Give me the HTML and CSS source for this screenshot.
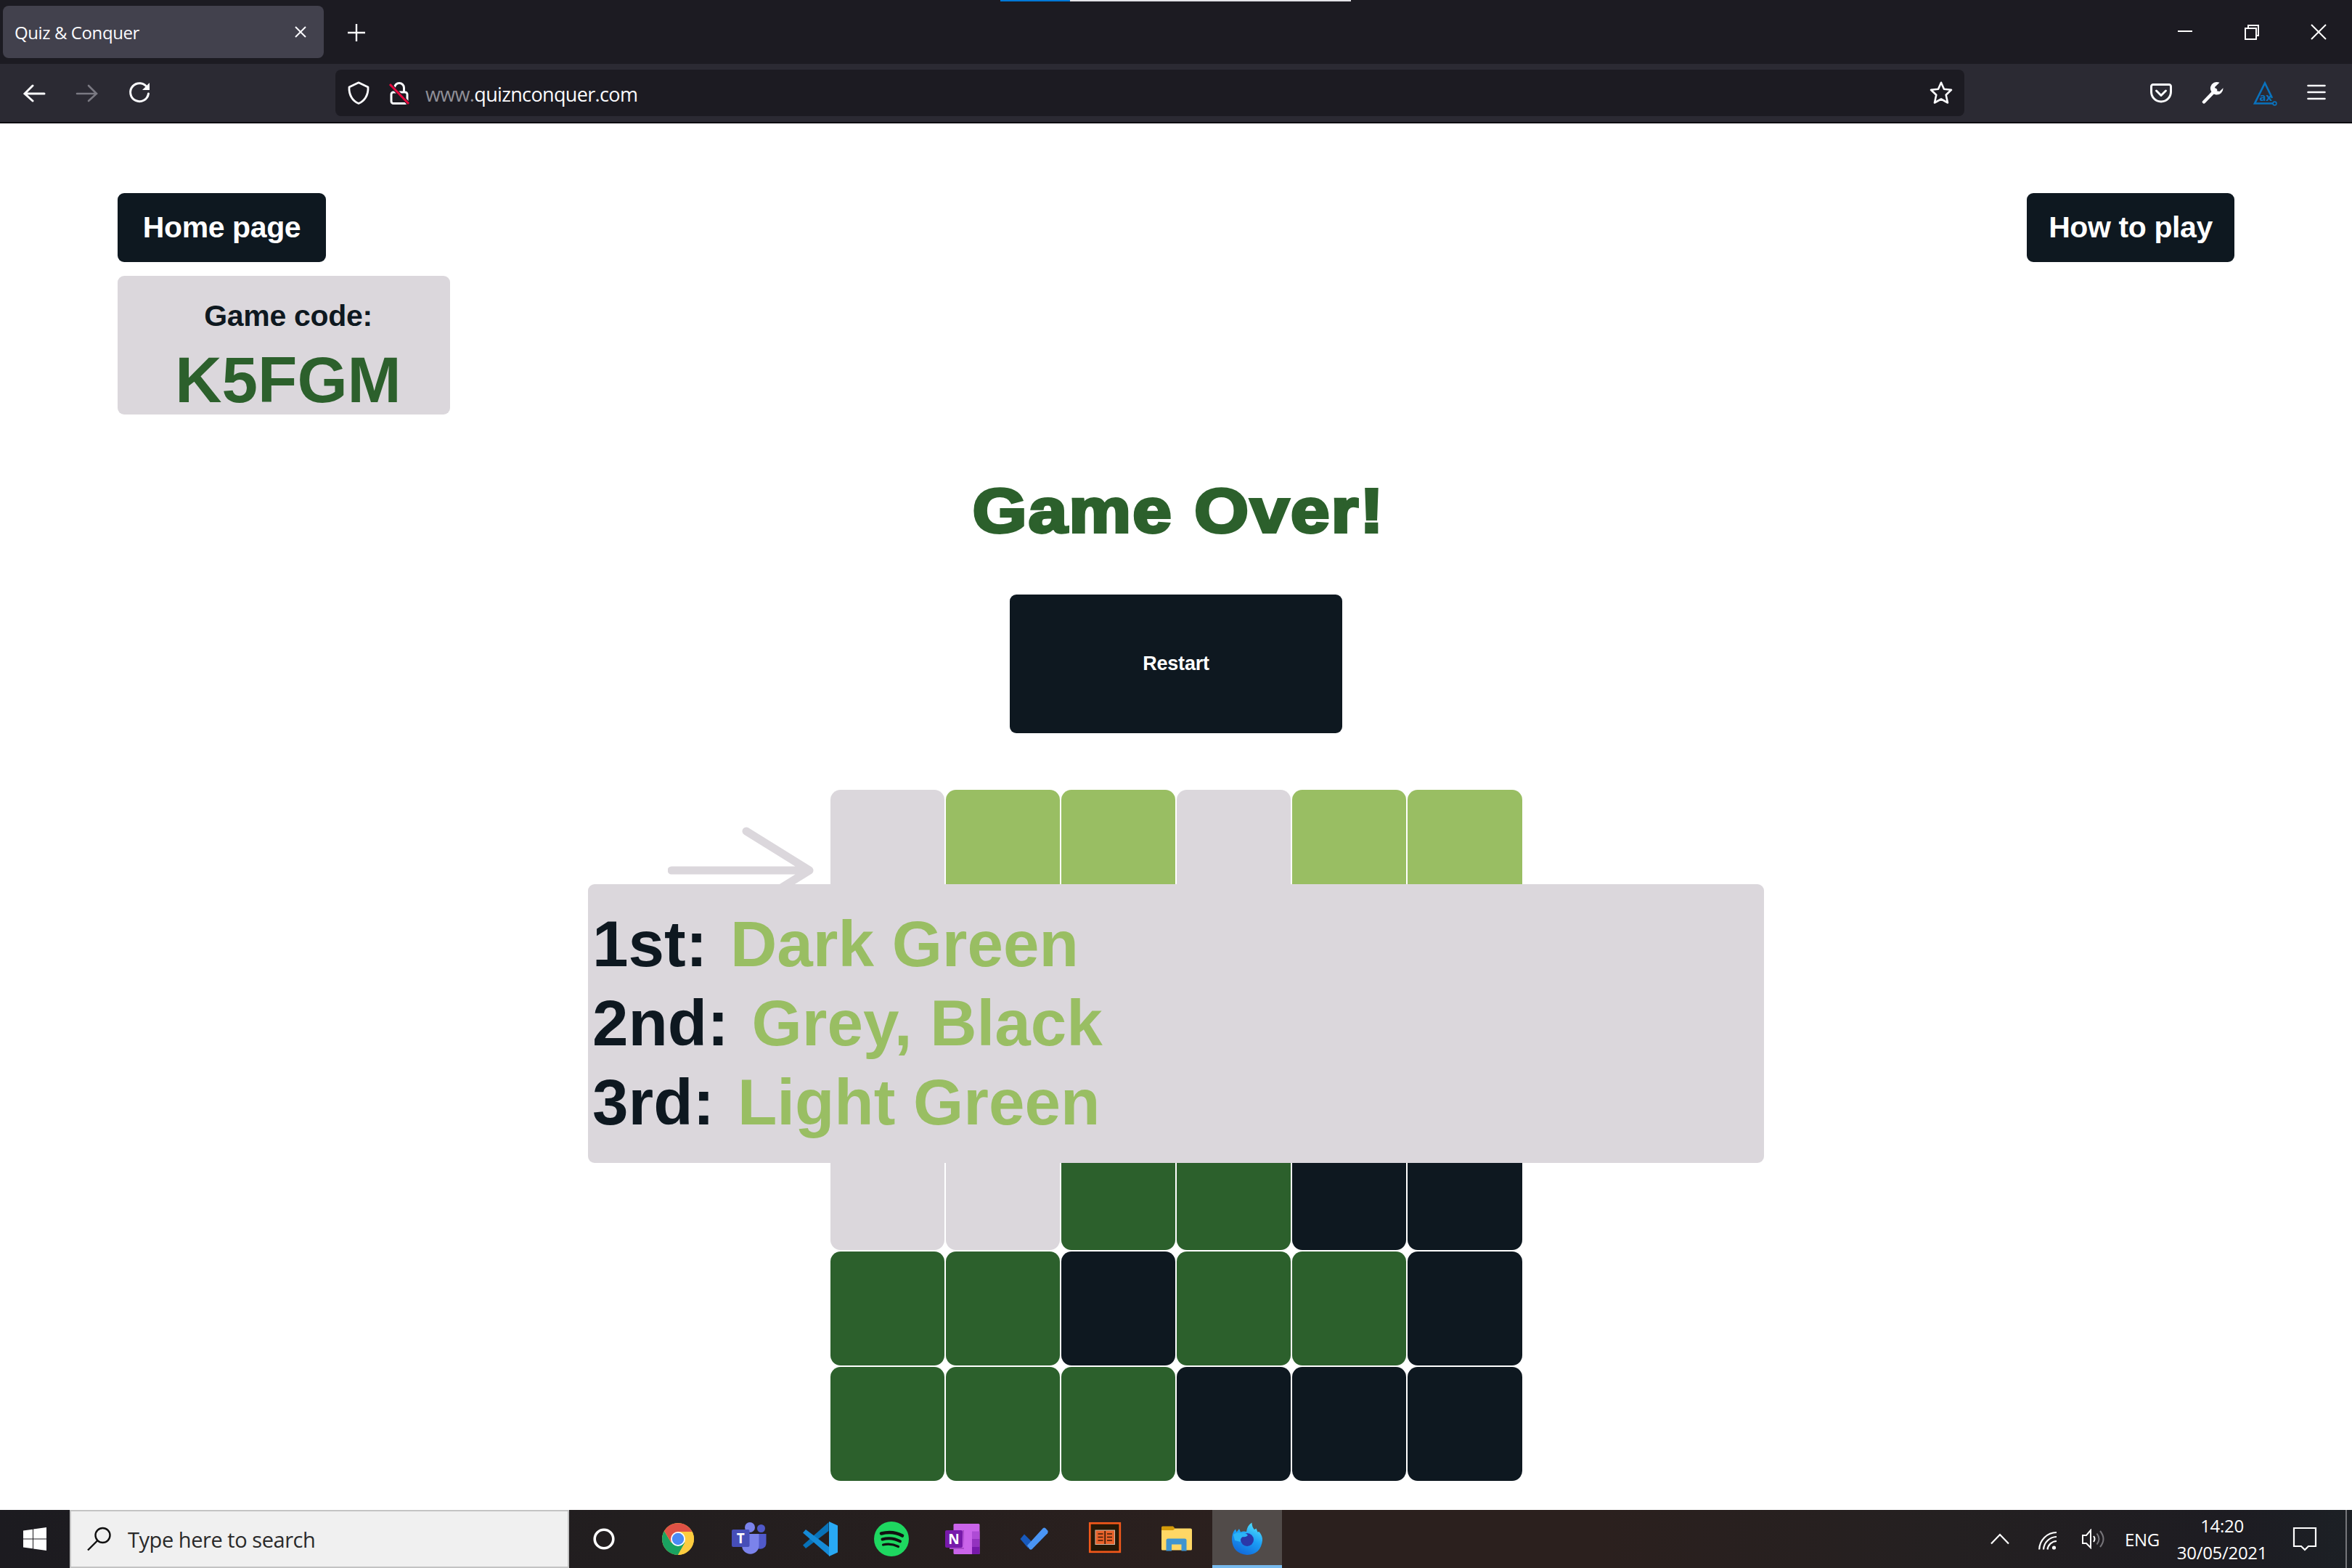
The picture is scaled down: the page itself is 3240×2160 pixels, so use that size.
FILE: index.html
```html
<!DOCTYPE html>
<html lang="en">
<head>
<meta charset="utf-8">
<title>Quiz &amp; Conquer</title>
<link rel="stylesheet" href="styles.css">
</head>
<body>
<header class="browser">
  <div class="tabstrip">
    <div class="progress"><span class="progress-done"></span></div>
    <div class="tab"><span class="tab-title">Quiz &amp; Conquer</span>
      <svg class="tab-close" width="16" height="28" viewBox="0 0 16 28"><path d="M1 7l14 14M15 7L1 21" stroke="#fbfbfe" stroke-width="2"/></svg>
    </div>
    <svg class="newtab" width="24" height="24" viewBox="0 0 24 24"><path d="M12 0v24M0 12h24" stroke="#fbfbfe" stroke-width="2.4"/></svg>
    <div class="window-controls">
      <svg width="22" height="22" viewBox="0 0 22 22"><path d="M1 10h20" stroke="#fff" stroke-width="2"/></svg>
      <svg width="22" height="22" viewBox="0 0 22 22" fill="none" stroke="#fff" stroke-width="2"><path d="M2 6h15v15H2zM6 6V2h14v14h-3"/></svg>
      <svg width="22" height="22" viewBox="0 0 22 22"><path d="M1 1l20 20M21 1L1 21" stroke="#fff" stroke-width="2"/></svg>
    </div>
  </div>
  <div class="toolbar">
    <div class="nav">
      <svg width="32" height="32" viewBox="0 0 32 32" fill="none" stroke="#fbfbfe" stroke-width="3" stroke-linecap="round"><path d="M29 17H2M13 6L2 17l11 10"/></svg>
      <svg width="32" height="32" viewBox="0 0 32 32" fill="none" stroke="#7a7982" stroke-width="2.6" stroke-linecap="round"><path d="M2 17h27M18 6l11 11-11 10"/></svg>
      <svg width="32" height="32" viewBox="0 0 32 32"><path d="M27 9A12.500 12.500 0 1 0 28.500 17" fill="none" stroke="#fbfbfe" stroke-width="3" stroke-linecap="round"/><path d="M30 2v10H20z" fill="#fbfbfe"/></svg>
    </div>
    <div class="urlbar">
      <svg class="shield" width="32" height="32" viewBox="0 0 32 32"><path d="M16 1.800L29 8c.6 11-5 19.500-13 22.500C8 27.500 2.400 19 3 8z" fill="none" stroke="#fbfbfe" stroke-width="2.800" stroke-linejoin="round"/></svg>
      <svg class="lock" width="30" height="32" viewBox="0 0 30 32"><g fill="none" stroke="#fbfbfe" stroke-width="3"><rect x="4" y="15" width="22" height="15.500" rx="3"/><path d="M8.500 9a6.500 6.500 0 0 1 13 0v6"/></g><path d="M2 4l26 27" stroke="#1c1b22" stroke-width="5"/><path d="M2 4l26 27" stroke="#e8083e" stroke-width="3"/></svg>
      <span class="url"><span class="url-dim">www.</span>quiznconquer.com</span>
      <svg class="star" width="32" height="32" viewBox="0 0 32 32"><path d="M16 1.800l4 9 10 1-7.300 7 2.300 10.700L16 24.500l-9 5L9.300 18.800 2 11.800l10-1z" fill="none" stroke="#fbfbfe" stroke-width="2.600" stroke-linejoin="round"/></svg>
    </div>
    <div class="extensions">
      <svg width="30" height="32" viewBox="0 0 30 32" fill="none" stroke="#fbfbfe" stroke-width="3" stroke-linecap="round" stroke-linejoin="round"><path d="M4 4.500h22a2.500 2.500 0 0 1 2.500 2.500v7.500a13.500 13.500 0 0 1-27 0V7A2.500 2.500 0 0 1 4 4.500zM8.500 13l6.500 6.500 6.500-6.500"/></svg>
      <svg width="32" height="32" viewBox="0 0 32 32"><path d="M4 28.500L20 12" stroke="#fbfbfe" stroke-width="4.500" stroke-linecap="round"/><path d="M25.500 1.800a8.800 8.800 0 1 0 5 7.500l-5 4.700-5-1-1.500-5z" fill="#fbfbfe"/></svg>
      <svg width="34" height="36" viewBox="0 0 34 36"><path d="M26 25L16 4.500 2 32.500h25" fill="none" stroke="#0a72bd" stroke-width="2.600"/><circle cx="29.500" cy="32.500" r="2.400" fill="none" stroke="#0a72bd" stroke-width="1.600"/><text x="8.500" y="28.500" class="axe-text">ax</text></svg>
      <svg width="26" height="32" viewBox="0 0 26 32"><path d="M1.500 6h23M1.500 15h23M1.500 24h23" stroke="#fbfbfe" stroke-width="2.600" stroke-linecap="round"/></svg>
    </div>
  </div>
</header>

<main class="page">
  <div class="top-row">
    <div class="top-left">
      <button class="btn home">Home page</button>
      <div class="game-code"><span class="code-label">Game code:</span><span class="code">K5FGM</span></div>
    </div>
    <button class="btn">How to play</button>
  </div>
  <h1 class="title">Game Over!</h1>
  <button class="btn restart">Restart</button>
  <div class="board-wrap">
    <svg class="arrow" width="208" height="140" viewBox="0 0 208 140" fill="none" stroke="#dbd7dc" stroke-width="11" stroke-linejoin="round" stroke-linecap="round"><path d="M5 71h185M108 17l87 54-87 54"/></svg>
    <div class="board">
      <i class="g"></i><i class="l"></i><i class="l"></i><i class="g"></i><i class="l"></i><i class="l"></i>
      <i class="g"></i><i class="l"></i><i class="l"></i><i class="g"></i><i class="l"></i><i class="l"></i>
      <i class="g"></i><i class="g"></i><i class="d"></i><i class="d"></i><i class="k"></i><i class="k"></i>
      <i class="g"></i><i class="g"></i><i class="d"></i><i class="d"></i><i class="k"></i><i class="k"></i>
      <i class="d"></i><i class="d"></i><i class="k"></i><i class="d"></i><i class="d"></i><i class="k"></i>
      <i class="d"></i><i class="d"></i><i class="d"></i><i class="k"></i><i class="k"></i><i class="k"></i>
    </div>
    <div class="results">
      <p>1st: <span>Dark Green</span></p>
      <p>2nd: <span>Grey, Black</span></p>
      <p>3rd: <span>Light Green</span></p>
    </div>
  </div>
</main>

<footer class="taskbar">
  <div class="start"><svg width="32" height="32" viewBox="0 0 32 32" fill="#fff"><path d="M0 4.500l13-1.800V15.500H0zM14 2.500L32 0v15.500H14zM0 16.500h13v12.800L0 27.500zM14 16.500h18V32l-18-2.500z"/></svg></div>
  <div class="search">
    <svg width="34" height="34" viewBox="0 0 34 34" fill="none" stroke="#111" stroke-width="2.400"><circle cx="21.500" cy="12" r="10"/><path d="M14.500 19L1 32.500"/></svg>
    <span>Type here to search</span>
  </div>
  <div class="apps">
    <div class="app cortana"><svg width="48" height="48" viewBox="0 0 48 48"><circle cx="24" cy="24" r="12.800" fill="none" stroke="#fff" stroke-width="3.600"/></svg></div>
    <div class="app"><svg width="48" height="48" viewBox="0 0 48 48"><circle cx="24" cy="24" r="22" fill="#fdcc3f"/><path d="M5 13A22 22 0 0 0 24 46l9.500-17L24 24 14.500 29z" fill="#1aa260"/><path d="M5 13a22 22 0 0 1 38.500 1H24l-9.500 14.500z" fill="#de5145"/><path d="M43.500 14A22 22 0 0 1 24 46l9.500-17V14z" fill="#fdcc3f"/><path d="M24 14h19.500l-8 12z" fill="#fdcc3f"/><circle cx="24" cy="24" r="10" fill="#fff"/><circle cx="24" cy="24" r="8.200" fill="#4b8af4"/></svg></div>
    <div class="app"><svg width="48" height="48" viewBox="0 0 48 48"><circle cx="40.500" cy="9.500" r="5.500" fill="#5059c9"/><path d="M32 17h15.500v13a8 8 0 0 1-13 6z" fill="#5059c9"/><circle cx="25" cy="8" r="7" fill="#7b83eb"/><path d="M14 17h23.500v16a11.500 11.500 0 0 1-23.500 0z" fill="#7b83eb"/><rect x="0" y="11" width="24.500" height="24" rx="2" fill="#464eb8"/><text x="12.200" y="30" class="glyph">T</text></svg></div>
    <div class="app"><svg width="48" height="48" viewBox="0 0 48 48"><path d="M4 37L35.500 13V1L0 32.500z" fill="#0872b8"/><path d="M4 11l32 24v12L0 15.500z" fill="#158bd7"/><path d="M36 0l12 5.500v37L36 48z" fill="#29a9f4"/></svg></div>
    <div class="app"><svg width="48" height="48" viewBox="0 0 48 48"><circle cx="24" cy="24" r="24" fill="#1ed760"/><g fill="none" stroke="#111" stroke-linecap="round"><path d="M10 16.500q16-4 29 3" stroke-width="4.600"/><path d="M11.500 24.500q13-3.500 24.500 2.800" stroke-width="4"/><path d="M12.500 32q11-2.500 21 2.500" stroke-width="3.200"/></g></svg></div>
    <div class="app"><svg width="48" height="48" viewBox="0 0 48 48"><rect x="11.500" y="3" width="36" height="42" rx="1.500" fill="#ca64ea"/><path d="M37 13.500h10.500V24H37z" fill="#ae4bd5"/><path d="M37 24h10.500v10.500H37z" fill="#9332bf"/><path d="M37 34.500h10.500V45H37z" fill="#7719aa"/><path d="M24 12h2v24H6v2h20z" fill="#a849c9"/><rect x="0" y="12" width="24" height="24" rx="2" fill="#7719aa"/><text x="12" y="30.500" class="glyph">N</text></svg></div>
    <div class="app"><svg width="48" height="48" viewBox="0 0 48 48"><path d="M11 17.500l10.500 10.500-5.500 8.500L5.500 24z" fill="#185abd"/><path d="M15 33L36.500 9.500a3 3 0 0 1 4 0l2.500 2.700a3 3 0 0 1 0 4L22 37.800a3 3 0 0 1-4 0z" fill="#4a95f5"/></svg></div>
    <div class="app"><svg width="48" height="48" viewBox="0 0 48 48"><rect x="3.300" y="2.300" width="41.500" height="39.500" fill="#251806" stroke="#f1581b" stroke-width="2.700"/><rect x="11" y="12" width="26.500" height="19.500" fill="#e9622a" stroke="#ccb9a8"/><path d="M24.200 13v18M14.500 17h7M14.500 21.500h7M14.500 26h7M27 17h7M27 21.500h7M27 26h7" stroke="#3b1c07" stroke-width="1.700"/></svg></div>
    <div class="app"><svg width="48" height="48" viewBox="0 0 48 48"><path d="M4 8q0-1.500 1.500-1.500H20l4 4.500V15H4z" fill="#d59b0a"/><path d="M4 12h16l3-2.500h21q2 0 2 2V38q0 1.500-1.500 1.500h-39Q4 39.500 4 38z" fill="#ffd765"/><path d="M13 23.500h23q2.500 0 2.500 2.500v14.500h-7v-9H18v9h-7.500V26q0-2.500 2.500-2.500z" fill="#3f94cf"/></svg></div>
    <div class="app active"><svg width="48" height="48" viewBox="0 0 48 48"><defs><linearGradient id="fx" x1="0.800" y1="0" x2="0.300" y2="1"><stop offset="0" stop-color="#55e5fd"/><stop offset=".5" stop-color="#1a9cf5"/><stop offset="1" stop-color="#1268d8"/></linearGradient></defs><path d="M4 17q1-4 4-6.500l1.500 4L13 10l2 4.500q4-1.500 8-.5 1-8.500 7.500-12.500 0 6 3.500 9.500l2.500-1.500 2 5 2-.5Q45.500 20 45 26 43 45 24 46 4 44 3 25q0-4 1-8z" fill="url(#fx)"/><circle cx="24" cy="25" r="9" fill="#2b37a8"/><path d="M5 18q5-4 11-2 6-1 9 3-3 3-7 2-4 2-3 7l-8-2z" fill="#2cb4f6"/></svg></div>
  </div>
  <div class="tray">
    <svg class="chev" width="28" height="18" viewBox="0 0 28 18"><path d="M2 15.500L14 3l12 12.500" fill="none" stroke="#fff" stroke-width="2.200"/></svg>
    <svg class="wifi" width="26" height="26" viewBox="0 0 26 26" fill="none" stroke="#fff" stroke-width="2.200"><path d="M1.200 25.500A24 24 0 0 1 25 2M7 25.500A18.500 18.500 0 0 1 25 8M12.500 25.500A13 13 0 0 1 25 14"/><circle cx="21.500" cy="23" r="2.600" fill="#fff" stroke="none"/></svg>
    <svg class="vol" width="34" height="28" viewBox="0 0 34 28" fill="none" stroke-width="2"><path d="M2 9h5l6-7v24l-6-6H2z" stroke="#fff"/><path d="M17 10q3 4 0 8" stroke="#fff"/><path d="M21.500 6.500q6 7.500 0 15M26 3q9 11 0 22" stroke="#77757a"/></svg>
    <span class="lang">ENG</span>
    <div class="clock"><span>14:20</span><span>30/05/2021</span></div>
    <svg class="note" width="34" height="34" viewBox="0 0 34 34" fill="none" stroke="#fff" stroke-width="2.200"><path d="M2 2h30v25H22l-5 5-5-5H2z"/></svg>
    <div class="desktop"></div>
  </div>
</footer>
</body>
</html>
```
FILE: styles.css
```css
* { box-sizing: border-box; }
body { margin: 0; width: 3240px; height: 2160px; overflow: hidden; display: flex; flex-direction: column; background: #fff; font-family: "Liberation Sans", Arial, sans-serif; }
svg { display: block; flex: none; }
.browser { height: 170px; flex: none; background: #2b2a33; border-bottom: 2px solid #0c0810; font-family: "Open Sans", "Noto Sans", sans-serif; color: #fbfbfe; }
.tabstrip { position: relative; height: 88px; background: #1c1b22; display: flex; align-items: center; padding-left: 4px; }
.progress { position: absolute; left: 1378px; top: 0; width: 483px; height: 2px; background: #e4e4e8; }
.progress-done { display: block; width: 96px; height: 2px; background: #0078d7; }
.tab { width: 442px; height: 72px; border-radius: 8px; background: #42414d; display: flex; align-items: center; justify-content: space-between; padding: 0 24px 0 16px; }
.tab-title { font-size: 24px; letter-spacing: -0.4px; white-space: nowrap; padding-top: 1px; }
.newtab { margin-left: 33px; margin-top: 1px; }
.window-controls { margin-left: auto; display: flex; gap: 70px; padding-right: 35px; }
.toolbar { height: 80px; display: flex; align-items: center; }
.nav { width: 462px; padding-left: 32px; display: flex; gap: 40px; }
.urlbar { width: 2244px; height: 64px; border-radius: 8px; background: #1c1b22; display: flex; align-items: center; padding: 0 16px 0 16px; }
.lock { margin-left: 25px; }
.url { font-size: 27px; letter-spacing: -0.65px; margin-left: 21px; white-space: nowrap; padding-top: 2px; }
.url-dim { color: #8f8f97; }
.star { margin-left: auto; }
.extensions { margin-left: auto; display: flex; align-items: center; gap: 40px; padding-right: 36px; }
.axe-text { font: 700 15px "Open Sans", sans-serif; fill: #0a72bd; }

.page { flex: 1; min-height: 0; display: flex; flex-direction: column; align-items: center; padding: 96px 162px 0; }
.btn { flex: none; border: 0; border-radius: 9px; background: #0e1820; color: #fff; font: 700 41px/1 "Liberation Sans", Arial, sans-serif; letter-spacing: -0.4px; width: 286px; height: 95px; padding: 0; }
.btn.home { width: 287px; }
.top-row { flex: none; width: 100%; height: 305px; display: flex; justify-content: space-between; align-items: flex-start; }
.top-left { display: flex; flex-direction: column; gap: 19px; }
.game-code { width: 458px; height: 191px; border-radius: 9px; background: #dbd7dc; display: flex; flex-direction: column; align-items: center; padding: 32px 0 0 12px; font-weight: 700; color: #0e1820; }
.code-label { font-size: 41px; line-height: 47px; letter-spacing: -0.3px; }
.code { font-size: 89px; line-height: 100px; margin-top: 14px; color: #2c602c; }
.title { margin: 83px 0 0; padding-left: 6px; font: 700 85px/100px "Liberation Sans", Arial, sans-serif; letter-spacing: 2.1px; -webkit-text-stroke: 4px #2c602c; transform: scaleX(1.13); color: #2c602c; white-space: nowrap; }
.btn.restart { width: 458px; height: 191px; margin-top: 65px; font-size: 27px; letter-spacing: -0.2px; }
.board-wrap { position: relative; margin-top: 78px; margin-left: 1px; width: 953px; }
.board { display: grid; grid-template-columns: repeat(6, 157.1px); grid-auto-rows: 157px; gap: 2px; }
.board i { border-radius: 14px; }
.g { background: #dbd7dc; }
.l { background: #99be63; }
.d { background: #2c602c; }
.k { background: #0e1820; }
.arrow { position: absolute; left: -224px; top: 40px; }
.results { position: absolute; left: -334px; top: 130px; width: 1620px; height: 384px; border-radius: 9px; background: #dbd7dc; padding: 28px 6px; font: 700 89px/109px "Liberation Sans", Arial, sans-serif; color: #0e1820; }
.results p { margin: 0; }
.results span { color: #99be63; margin-left: 7px; }

.taskbar { height: 80px; flex: none; display: flex; background: linear-gradient(90deg, #1c1b20 0, #221e1f 27%, #2b201e 52%, #2b201e 68%, #242021 83%, #1d1c22 95%, #1c2025); font-family: "Open Sans", "Noto Sans", sans-serif; color: #fff; }
.start { width: 96px; display: flex; align-items: center; justify-content: center; }
.search { width: 688px; background: #f0f0f0; border: 2px solid #c3c3c3; display: flex; align-items: center; padding-left: 22px; gap: 22px; color: #2a2a2a; font-size: 29px; letter-spacing: -0.45px; white-space: nowrap; }
.apps { display: flex; }
.app { width: 98px; display: flex; align-items: center; justify-content: center; }
.app.cortana { width: 101px; padding-right: 5px; }
.app.active { width: 96px; margin-left: 1px; background: #514b49; border-bottom: 4px solid #76b9ed; padding-top: 4px; }
.glyph { font: 700 19px "Open Sans", sans-serif; fill: #fff; text-anchor: middle; }
.tray { margin-left: auto; display: flex; align-items: center; white-space: nowrap; font-size: 24px; letter-spacing: -0.3px; }
.wifi { margin-left: 39px; margin-top: 4px; }
.vol { margin-left: 33px; }
.lang { margin-left: 26px; width: 46px; }
.clock { margin-left: 28px; width: 120px; display: flex; flex-direction: column; align-items: center; line-height: 37px; }
.note { margin-left: 37px; }
.desktop { width: 9px; height: 80px; margin-left: 39px; border-left: 2px solid #76767a; }
```
